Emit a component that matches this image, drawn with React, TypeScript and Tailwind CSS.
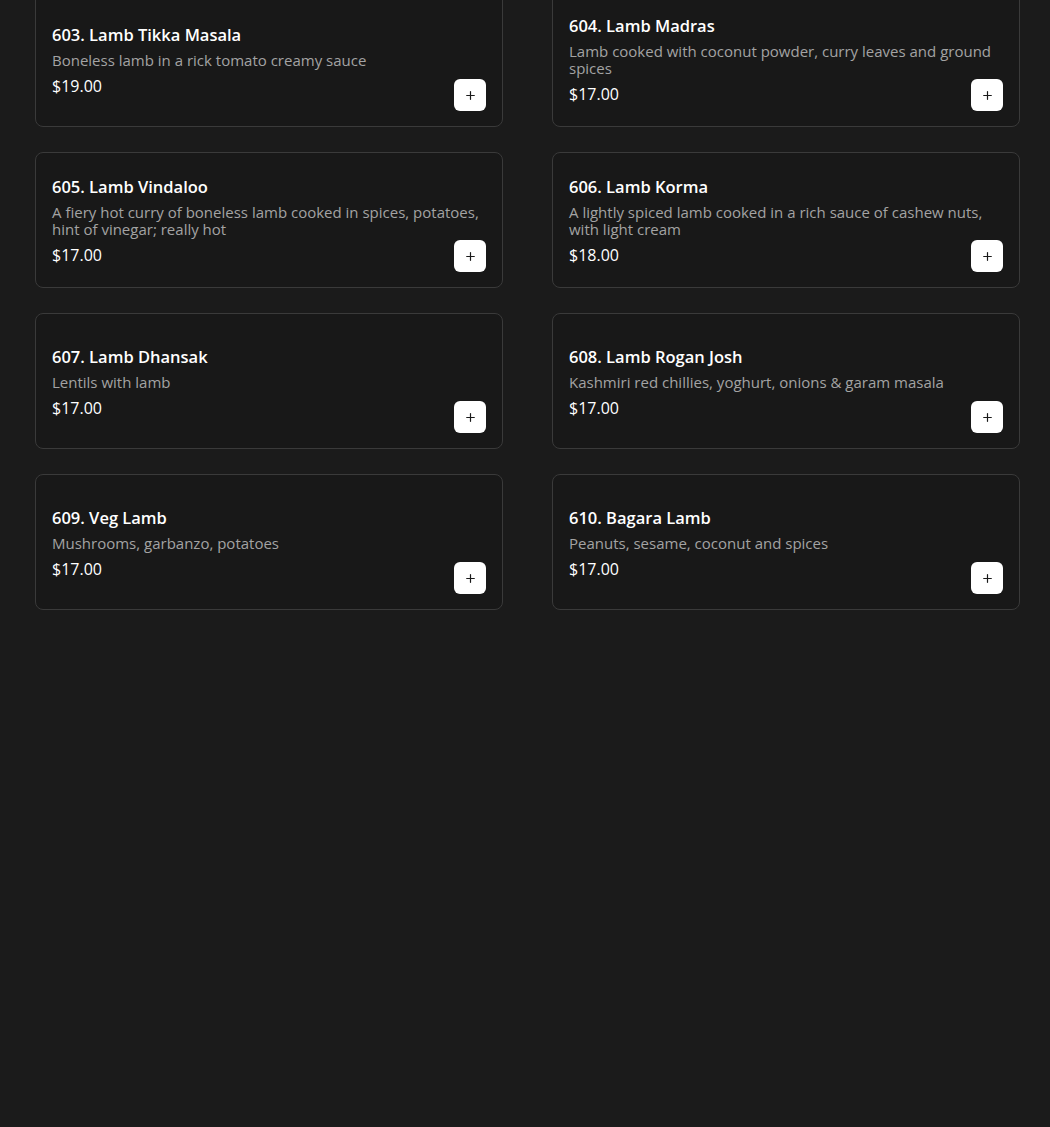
import { Plus } from 'lucide-react'

type Dish = {
  name: string
  desc: string
  price: string
}

const dishes: Dish[] = [
  { name: '603. Lamb Tikka Masala', desc: 'Boneless lamb in a rick tomato creamy sauce', price: '$19.00' },
  { name: '604. Lamb Madras', desc: 'Lamb cooked with coconut powder, curry leaves and ground spices', price: '$17.00' },
  { name: '605. Lamb Vindaloo', desc: 'A fiery hot curry of boneless lamb cooked in spices, potatoes, hint of vinegar; really hot', price: '$17.00' },
  { name: '606. Lamb Korma', desc: 'A lightly spiced lamb cooked in a rich sauce of cashew nuts, with light cream', price: '$18.00' },
  { name: '607. Lamb Dhansak', desc: 'Lentils with lamb', price: '$17.00' },
  { name: '608. Lamb Rogan Josh', desc: 'Kashmiri red chillies, yoghurt, onions & garam masala', price: '$17.00' },
  { name: '609. Veg Lamb', desc: 'Mushrooms, garbanzo, potatoes', price: '$17.00' },
  { name: '610. Bagara Lamb', desc: 'Peanuts, sesame, coconut and spices', price: '$17.00' },
]

// carte de un plato: texto centrado, botón abajo a la derecha
function DishCard({ dish }: { dish: Dish }) {
  return (
    <div className="relative flex h-[136px] flex-col justify-center rounded-lg border border-[#3a3a3a] bg-[#181818] px-4 pb-4 pt-[18px]">
      <h3 className="text-[16.5px] font-semibold leading-6 text-white">{dish.name}</h3>
      <p className="mt-[5px] text-[15px] leading-[17px] text-[#a3a3a3]">{dish.desc}</p>
      <span className="mt-[5px] text-[16px] leading-6 text-white">{dish.price}</span>
      <button className="absolute bottom-[15px] right-4 flex h-8 w-8 items-center justify-center rounded-md bg-white text-[#1a1a1a]">
        <Plus size={13} strokeWidth={2.2} />
      </button>
    </div>
  )
}

export default function App() {
  return (
    <div
      className="min-h-[1127px] w-full overflow-hidden bg-[#1b1b1b]"
      style={{ fontFamily: '"Open Sans", sans-serif' }}
    >
      <div className="-mt-[9px] grid grid-cols-2 gap-x-[49px] gap-y-[25px] pl-[35px] pr-[30px]">
        {dishes.map((d) => (
          <DishCard key={d.name} dish={d} />
        ))}
      </div>
    </div>
  )
}
